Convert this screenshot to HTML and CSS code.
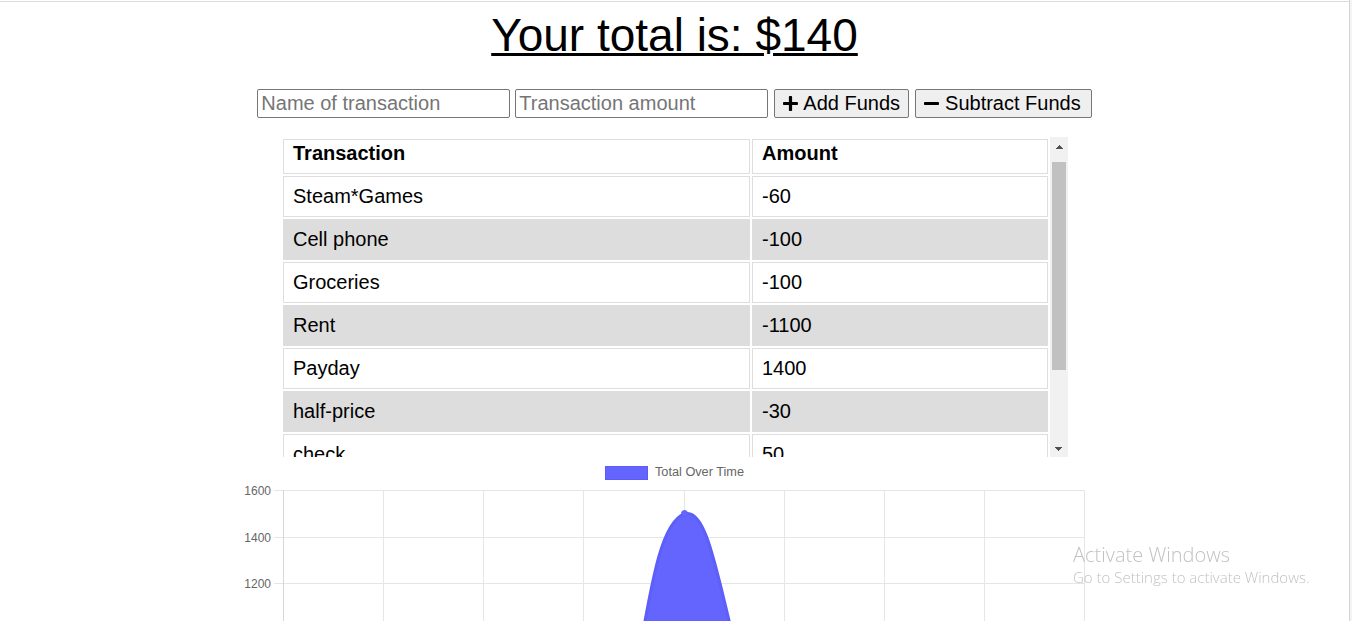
FILE: index.html
```html
<!DOCTYPE html>
<html lang="en">
<head>
<meta charset="utf-8">
<title>Budget Tracker</title>
<link rel="stylesheet" href="styles.css">
</head>
<body>
  <h1 class="total">Your total is: $<span id="total">140</span></h1>

  <form class="entry">
    <input class="field" type="text" placeholder="Name of transaction">
    <input class="field" type="number" placeholder="Transaction amount">
    <button class="btn" type="button">
      <svg class="ico" viewBox="0 32 448 448" aria-hidden="true"><path d="M416 208H272V64c0-17.670-14.330-32-32-32h-32c-17.670 0-32 14.330-32 32v144H32c-17.670 0-32 14.330-32 32v32c0 17.670 14.330 32 32 32h144v144c0 17.670 14.330 32 32 32h32c17.670 0 32-14.330 32-32V304h144c17.670 0 32-14.330 32-32v-32c0-17.670-14.330-32-32-32z"/></svg>
      <span>Add Funds</span>
    </button>
    <button class="btn btn-sub" type="button">
      <svg class="ico" viewBox="0 32 448 448" aria-hidden="true"><path d="M416 208H32c-17.670 0-32 14.330-32 32v32c0 17.670 14.330 32 32 32h384c17.670 0 32-14.330 32-32v-32c0-17.670-14.330-32-32-32z"/></svg>
      <span>Subtract Funds</span>
    </button>
  </form>

  <div class="tablebox">
    <div class="scroller">
      <table class="tx">
        <thead>
          <tr><th class="c-name">Transaction</th><th class="c-amt">Amount</th></tr>
        </thead>
        <tbody>
          <tr><td>Steam*Games</td><td>-60</td></tr>
          <tr><td>Cell phone</td><td>-100</td></tr>
          <tr><td>Groceries</td><td>-100</td></tr>
          <tr><td>Rent</td><td>-1100</td></tr>
          <tr><td>Payday</td><td>1400</td></tr>
          <tr><td>half-price</td><td>-30</td></tr>
          <tr><td>check</td><td>50</td></tr>
          <tr><td>bonus</td><td>50</td></tr>
          <tr><td>gift</td><td>30</td></tr>
        </tbody>
      </table>
    </div>
    <div class="vbar" aria-hidden="true">
      <div class="vbar-btn vbar-up"></div>
      <div class="vbar-track"><div class="vbar-thumb"></div></div>
      <div class="vbar-btn vbar-down"></div>
    </div>
  </div>

  <svg class="chart" width="901" height="420" viewBox="0 0 901 420">
    <g class="legend">
      <rect x="381.5" y="6.5" width="42" height="13" fill="#6464ff" stroke="#5c5cf5" stroke-width="1"/>
      <text x="431" y="16" textLength="89" lengthAdjust="spacingAndGlyphs">Total Over Time</text>
    </g>
    <g class="grid" shape-rendering="crispEdges">
      <line x1="50" y1="30.5" x2="861" y2="30.5"/>
      <line x1="50" y1="77.5" x2="861" y2="77.5"/>
      <line x1="50" y1="123.5" x2="861" y2="123.5"/>
      <line x1="50" y1="170.5" x2="861" y2="170.5"/>
      <line x1="50" y1="216.5" x2="861" y2="216.5"/>
      <line x1="50" y1="263.5" x2="861" y2="263.5"/>
      <line x1="50" y1="309.5" x2="861" y2="309.5"/>
      <line x1="50" y1="356.5" x2="861" y2="356.5"/>
      <line x1="50" y1="402.5" x2="861" y2="402.5"/>
      <line x1="159.5" y1="30" x2="159.5" y2="413"/>
      <line x1="259.5" y1="30" x2="259.5" y2="413"/>
      <line x1="359.5" y1="30" x2="359.5" y2="413"/>
      <line x1="460.5" y1="30" x2="460.5" y2="413"/>
      <line x1="560.5" y1="30" x2="560.5" y2="413"/>
      <line x1="660.5" y1="30" x2="660.5" y2="413"/>
      <line x1="760.5" y1="30" x2="760.5" y2="413"/>
      <line x1="860.5" y1="30" x2="860.5" y2="413"/>
      <line class="axis" x1="59.5" y1="30" x2="59.5" y2="413"/>
    </g>
    <g class="ticks">
      <text x="47" y="34.5">1600</text>
      <text x="47" y="81.5">1400</text>
      <text x="47" y="127.5">1200</text>
      <text x="47" y="174.5">1000</text>
      <text x="47" y="220.5">800</text>
      <text x="47" y="267.5">600</text>
      <text x="47" y="313.5">400</text>
      <text x="47" y="360.5">200</text>
      <text x="47" y="406.5">0</text>
    </g>
    <path class="area" d="M59.5 395.5 L159.5 383.9 L260 372.3 L360 379.25 C421.8 280.9 415.7 69.4 460.5 54 C495.7 41.5 501.8 228.4 560.5 309.5 L660.5 332.75 L760.5 356 L860.5 370 L860.5 402.5 L59.5 402.5 Z"/>
    <path class="line" d="M59.5 395.5 L159.5 383.9 L260 372.3 L360 379.25 C421.8 280.9 415.7 69.4 460.5 54 C495.7 41.5 501.8 228.4 560.5 309.5 L660.5 332.75 L760.5 356 L860.5 370"/>
    <circle class="pt" cx="460.5" cy="53.5" r="3"/>
  </svg>

  <div class="activate">
    <div class="act-title">Activate Windows</div>
    <div class="act-sub">Go to Settings to activate Windows.</div>
  </div>
  <div class="edge-top"></div>
  <div class="edge-right"></div>
</body>
</html>
```

FILE: styles.css
```css
html, body {
  background: #ffffff;
}

body {
  margin: 0;
  padding: 0 3px 0 0;
  font-family: "Liberation Sans", Arial, sans-serif;
  color: #000;
}

.total {
  margin: 9px 0 0;
  font-size: 46px;
  line-height: 52px;
  font-weight: 400;
  text-align: center;
  text-decoration: underline;
  text-decoration-thickness: 3px;
}

.entry {
  display: flex;
  justify-content: center;
  align-items: center;
  gap: 6px;
  margin: 28px 0 0;
}

.field {
  box-sizing: border-box;
  width: 253px;
  height: 29px;
  margin: 0;
  padding: 1px 3px;
  border: 1px solid #767676;
  border-radius: 2px;
  font-family: "Liberation Sans", Arial, sans-serif;
  font-size: 20px;
  color: #000;
  background: #fff;
}

.field:first-child {
  margin-right: -1px;
}

.field::placeholder {
  color: #757575;
}

.field::-webkit-outer-spin-button,
.field::-webkit-inner-spin-button {
  -webkit-appearance: none;
  margin: 0;
}

.btn {
  box-sizing: border-box;
  height: 29px;
  margin: 0;
  padding: 0 8px;
  display: inline-flex;
  align-items: center;
  gap: 5px;
  border: 1px solid #767676;
  border-radius: 2px;
  background: #efefef;
  font-family: "Liberation Sans", Arial, sans-serif;
  font-size: 20px;
  color: #000;
}

.btn-sub {
  padding: 0 10px 0 8px;
  gap: 6px;
}

.ico {
  width: 15px;
  height: 15px;
  fill: #000;
  flex: none;
}

.tablebox {
  display: flex;
  width: 787px;
  height: 320px;
  margin: 19px auto 0;
}

.scroller {
  width: 769px;
  height: 320px;
  overflow: hidden;
  flex: none;
}

.vbar {
  width: 18px;
  flex: none;
  display: flex;
  flex-direction: column;
  background: #f1f1f1;
}

.vbar-btn {
  height: 17px;
  flex: none;
  background-repeat: no-repeat;
}

.vbar-up {
  margin-top: 1px;
  background-image: conic-gradient(from 135deg at 50% 7px, #505050 0deg 90deg, transparent 90deg);
  background-size: 18px 11px;
}

.vbar-down {
  background-image: conic-gradient(from -45deg at 50% 4px, #505050 0deg 90deg, transparent 90deg);
  background-size: 18px 4px;
  background-position: 0 7px;
}

.vbar-track {
  flex: 1;
  padding: 7px 2px 0 2px;
}

.vbar-thumb {
  height: 208px;
  background: #c1c1c1;
}

.tx {
  width: 769px;
  table-layout: fixed;
  border-collapse: separate;
  border-spacing: 2px;
  font-size: 20px;
}

.tx th,
.tx td {
  box-sizing: border-box;
  border: 1px solid #dedede;
  text-align: left;
  line-height: 23px;
}

.tx th {
  padding: 2px 9px 8px;
  font-weight: 700;
}

.c-name {
  width: 467px;
}

.c-amt {
  width: 296px;
}

.tx td {
  padding: 8px 9px;
}

.tx tbody tr:nth-child(even) td {
  background: #dddddd;
  border-color: #dddddd;
}

.chart {
  display: block;
  margin: 3px auto 0;
}

.legend text,
.ticks text {
  font-family: "Liberation Sans", Arial, sans-serif;
  font-size: 12px;
  fill: #666;
}

.ticks text {
  text-anchor: end;
}

.grid line {
  stroke: #e6e6e6;
  stroke-width: 1;
}

.grid .axis {
  stroke: #d6d6d6;
}

.area {
  fill: #6464ff;
}

.line {
  fill: none;
  stroke: #5e5ef8;
  stroke-width: 3;
}

.pt {
  fill: #6464ff;
  stroke: #5e5ef8;
  stroke-width: 1;
}

.activate {
  position: fixed;
  left: 1073px;
  top: 543px;
  color: #c2c2c2;
  font-family: "Open Sans", "Noto Sans", sans-serif;
  font-weight: 300;
  pointer-events: none;
}

.act-title {
  font-size: 20px;
  line-height: 24px;
}

.act-sub {
  font-size: 15px;
  line-height: 20px;
}

.edge-top {
  position: fixed;
  top: 1px;
  left: 0;
  right: 0;
  height: 1px;
  background: #dcdcdc;
}

.edge-right {
  position: fixed;
  top: 0;
  right: 0;
  bottom: 0;
  width: 2px;
  background: #f4f4f4;
  border-left: 1px solid #d4d4d4;
}
```
